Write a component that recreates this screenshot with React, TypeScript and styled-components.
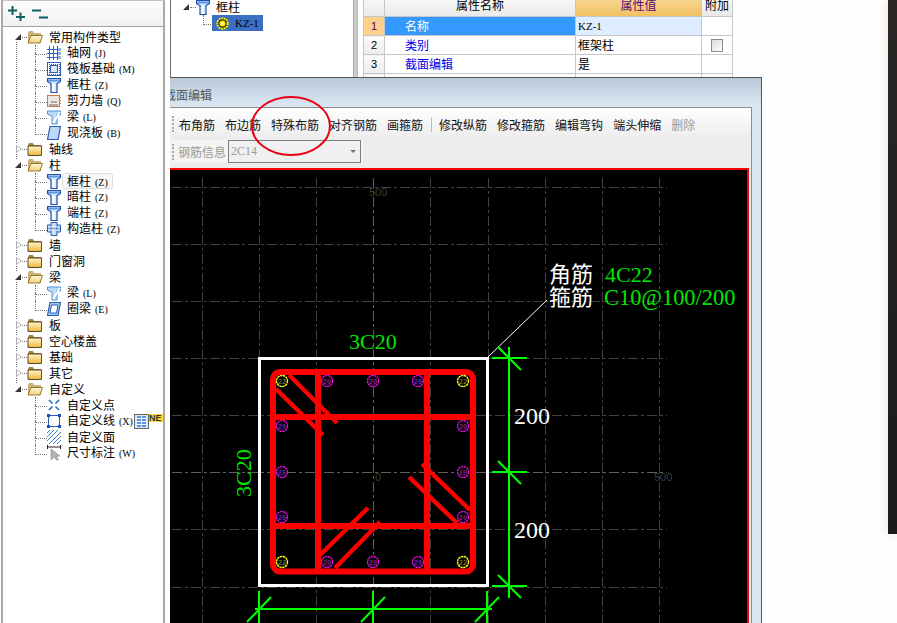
import React from 'react';
import styled, { createGlobalStyle } from 'styled-components';

const GlobalStyle = createGlobalStyle`
  html, body {
    margin: 0;
    padding: 0;
    background: #fff;
    font-family: "Noto Sans CJK SC", "Liberation Sans", sans-serif;
    font-size: 12px;
    color: #000;
  }
  * { box-sizing: border-box; }
`;

const Page = styled.div`
  position: relative;
  display: flex;
  width: 897px;
  height: 623px;
  overflow: hidden;
  background: #fefefe;
`;

/* left component type panel */
const LeftPanel = styled.div`
  flex: none;
  width: 164px;
  height: 100%;
  margin-left: 1px;
  display: flex;
  flex-direction: column;
  border-left: 2px solid #a9a9a9;
  border-right: 2px solid #a9a9a9;
  border-top: 1px solid #c4c4c4;
  background: #fff;
`;

const TreeToolbar = styled.div`
  flex: none;
  height: 26px;
  display: flex;
  align-items: center;
  gap: 7px;
  padding-left: 5px;
  border-bottom: 1px solid #a3a3a3;
  background: linear-gradient(#fcfcfc, #f1f1f1);
`;

const TreeBody = styled.div`
  flex: 1;
  padding-top: 2px;
`;

const RootNode = styled.div`
  position: relative;

  &:not(:last-child)::before {
    content: '';
    position: absolute;
    left: 13px;
    top: 8px;
    bottom: -8px;
    border-left: 1px dotted #777;
  }
`;

const RootRow = styled.div`
  position: relative;
  height: 16px;
  display: flex;
  align-items: center;
  padding-left: 11px;
`;

const Expander = styled.svg`
  position: relative;
  flex: none;
  width: 8px;
  height: 10px;
  background: #fff;
`;

const Stub = styled.span<{ $w?: number }>`
  flex: none;
  width: ${p => p.$w ?? 5}px;
  height: 0;
  border-top: 1px dotted #777;
`;

const Label = styled.span<{ $gap?: number }>`
  margin-left: ${p => p.$gap ?? 6}px;
  white-space: nowrap;
  line-height: 16px;
`;

const Key = styled.span`
  margin-left: 4px;
  font-family: "Liberation Serif", serif;
  font-size: 10px;
`;

const ChildRow = styled.div`
  position: relative;
  height: 16px;
  display: flex;
  align-items: center;
  padding-left: 44px;

  &::before {
    content: '';
    position: absolute;
    left: 32px;
    top: 0;
    width: 11px;
    height: 9px;
    border-left: 1px dotted #777;
    border-bottom: 1px dotted #777;
  }

  &:not(:last-child)::after {
    content: '';
    position: absolute;
    left: 32px;
    top: 8px;
    height: 8px;
    border-left: 1px dotted #777;
  }
`;

const ActiveLabel = styled(Label)`
  margin-left: 1px;
  padding: 0 4px;
  height: 16px;
  border: 1px solid #ddd;
  border-radius: 3px;
  line-height: 14px;
  background: #f8f8f8;
`;

const NewTool = styled.span`
  flex: none;
  margin-left: 1px;
  width: 15px;
  height: 15px;
  display: flex;
  align-items: center;
  justify-content: center;
  gap: 1px;
  border: 1px solid #666;
  background: #dfe8f3;
`;

const NewBar = styled.span`
  width: 4px;
  height: 11px;
  background: repeating-linear-gradient(#5b96dc 0 2px, #fff 2px 3px);
`;

const NewBadge = styled.span`
  flex: none;
  align-self: flex-start;
  height: 8px;
  width: 14px;
  margin-top: 1px;
  font-family: "Liberation Sans", sans-serif;
  font-size: 9px;
  font-weight: bold;
  line-height: 8px;
  overflow: hidden;
  background: #ffd92e;
  color: #333;
`;

/* top right: component list and property grid */
const Workspace = styled.div`
  flex: 1;
  min-width: 0;
  padding-left: 5px;
`;

const TopArea = styled.div`
  display: flex;
  height: 77px;
`;

const ComponentTree = styled.div`
  flex: none;
  width: 183px;
  border-left: 1px solid #6e6e6e;
  background: #fff;
`;

const CompRoot = styled.div`
  height: 16px;
  margin-top: -1px;
  display: flex;
  align-items: center;
  padding-left: 11px;
`;

const CompChild = styled.div`
  position: relative;
  height: 16px;
  margin-left: 41px;
  width: 51px;
  display: flex;
  align-items: center;
  gap: 6px;
  padding-left: 4px;
  background: #3a6fc2;

  &::before {
    content: '';
    position: absolute;
    left: -9px;
    top: 0;
    width: 9px;
    height: 9px;
    border-left: 1px dotted #777;
    border-bottom: 1px dotted #777;
  }
`;

const CompName = styled.span`
  font-family: "Liberation Serif", serif;
  font-size: 11px;
  line-height: 16px;
  color: #000;
`;

const Splitter = styled.div`
  flex: none;
  width: 10px;
  border-left: 1px solid #a8a8a8;
  border-right: 5px solid #fff;
  background: linear-gradient(90deg, #d5d5d5, #bbb);
`;

const TableClip = styled.div`
  flex: none;
  width: 370px;
  height: 77px;
  overflow: hidden;
`;

const PropTable = styled.table`
  width: 370px;
  margin-top: -6px;
  border-collapse: collapse;
  table-layout: fixed;
`;

const HeadCell = styled.th<{ $active?: boolean; $w: number }>`
  width: ${p => p.$w}px;
  height: 22px;
  padding: 0 0 2px;
  font-weight: normal;
  font-size: 12px;
  text-align: center;
  border: 1px solid #c6c6c6;
  color: ${p => (p.$active ? '#5a0a70' : '#000')};
  background: ${p =>
    p.$active ? 'linear-gradient(#f8da9b, #f2c061)' : 'linear-gradient(#fafafa, #e9e9e9)'};
`;

const RowHead = styled.td<{ $active?: boolean }>`
  height: 19px;
  padding: 0 0 1px;
  font-family: "Liberation Sans", sans-serif;
  font-size: 11px;
  text-align: center;
  border: 1px solid #c6c6c6;
  color: ${p => (p.$active ? '#5a0a50' : '#000')};
  background: ${p => (p.$active ? '#fdd08c' : 'linear-gradient(#fbfbfb, #ececec)')};
`;

const NameCell = styled.td<{ $active?: boolean }>`
  padding: 0 0 1px 20px;
  font-size: 12px;
  line-height: 16px;
  border: 1px solid #c6c6c6;
  color: ${p => (p.$active ? '#fff' : '#0000e6')};
  background: ${p => (p.$active ? '#3399ff' : '#fff')};
`;

const ValueCell = styled.td<{ $active?: boolean; $latin?: boolean }>`
  padding: 0 0 1px 2px;
  font-size: ${p => (p.$latin ? '11px' : '12px')};
  line-height: 16px;
  font-family: ${p => (p.$latin ? '"Liberation Serif", serif' : 'inherit')};
  border: 1px solid #c6c6c6;
  background: ${p => (p.$active ? '#deedff' : '#fff')};
`;

const ExtraCell = styled.td`
  padding: 0;
  border: 1px solid #c6c6c6;
  background: #fff;
`;

const CheckBox = styled.span`
  display: block;
  width: 12px;
  height: 13px;
  margin: 0 auto;
  border: 1px solid #8c8c8c;
  background: linear-gradient(135deg, #dcdcdc, #fff);
`;

/* section editor window */
const EditorWindow = styled.div`
  position: absolute;
  left: 170px;
  top: 77px;
  bottom: 0;
  width: 592px;
  display: flex;
  flex-direction: column;
  border-top: 1px solid #555;
  border-right: 1px solid #555;
  background: #dbe6f3;
`;

const TitleBar = styled.div`
  flex: none;
  height: 29px;
  overflow: hidden;
  display: flex;
  align-items: center;
  padding-top: 3px;
  background: linear-gradient(#b9c9d9, #dce7f3);
`;

const Title = styled.span`
  margin-left: -6px;
  color: #555;
  font-size: 12px;
  white-space: nowrap;
`;

const EditorBody = styled.div`
  flex: 1;
  min-height: 0;
  margin-right: 9px;
  display: flex;
  flex-direction: column;
  border-top: 1px solid #8d8d8d;
  border-right: 1px solid #8d8d8d;
  background: #f3f3f3;
`;

const ToolRow = styled.div`
  flex: none;
  height: 32px;
  display: flex;
  align-items: center;
  padding-left: 2px;
  background: linear-gradient(#fefefe, #ececec);
`;

const Grip = styled.span`
  flex: none;
  width: 2px;
  height: 16px;
  margin-right: 5px;
  border-left: 2px dotted #aaa;
`;

const ToolButton = styled.span<{ $disabled?: boolean }>`
  margin-right: 10px;
  font-size: 12px;
  white-space: nowrap;
  color: ${p => (p.$disabled ? '#999' : '#111')};
`;

const ToolSep = styled.span`
  flex: none;
  width: 1px;
  height: 15px;
  margin: 0 7px 0 -2px;
  background: #bbb;
`;

const SecondRow = styled.div`
  flex: none;
  height: 28px;
  padding-bottom: 4px;
  display: flex;
  align-items: flex-start;
  background: #ececec;
`;

const SecondInner = styled.div`
  width: 193px;
  height: 23px;
  display: flex;
  align-items: center;
  padding-left: 2px;
  background: #f4f4f4;
  border-radius: 0 0 3px 0;
`;

const FieldLabel = styled.span`
  flex: none;
  width: 50px;
  margin-left: -1px;
  color: #999;
  font-size: 12px;
`;

const FakeSelect = styled.div`
  flex: none;
  width: 133px;
  height: 23px;
  display: flex;
  align-items: center;
  justify-content: space-between;
  padding: 0 4px 0 2px;
  border: 1px solid #7d7d7d;
  background: #f0f0f0;
  color: #999;
  font-family: "Liberation Serif", serif;
  font-size: 12px;
`;

const Caret = styled.span`
  width: 0;
  height: 0;
  border-left: 3px solid transparent;
  border-right: 3px solid transparent;
  border-top: 3px solid #777;
`;

const CanvasFrame = styled.div`
  flex: 1;
  min-height: 0;
  border-top: 2px solid #ff0000;
  border-right: 2px solid #ff0000;
  margin-right: 2px;
  background: #000;
`;

const Drawing = styled.svg`
  display: block;
  width: 577px;
  height: 453px;
`;

const GridText = styled.text`
  font-family: "Liberation Sans", sans-serif;
  font-size: 11px;
  fill: #3a3a3a;
`;

const DimText = styled.text<{ $size?: number }>`
  font-family: "Liberation Serif", serif;
  font-size: ${p => p.$size ?? 22}px;
  fill: #00e600;
`;

const WhiteText = styled.text<{ $size?: number }>`
  font-family: "Liberation Serif", serif;
  font-size: ${p => p.$size ?? 24}px;
  fill: #fff;
`;

const CjkText = styled.text`
  font-family: "Noto Sans CJK SC", sans-serif;
  font-size: 22px;
  fill: #fff;
`;

const BarText = styled.text<{ $corner: boolean }>`
  font-family: "Liberation Mono", monospace;
  font-size: 7px;
  text-anchor: middle;
  fill: ${p => (p.$corner ? '#99994a' : '#a030d0')};
`;

const CircleNote = styled.svg`
  position: absolute;
  left: 250px;
  top: 95px;
  width: 84px;
  height: 62px;
  pointer-events: none;
`;

const SideWindow = styled.div`
  position: absolute;
  right: 0;
  top: 0;
  width: 9px;
  height: 534px;
  background: linear-gradient(#2c2723, #1b1b1b);
  box-shadow: 0 0 12px rgba(0, 0, 0, 0.12);
`;

/* ---- icons ---- */
type IconKind = 'axis' | 'raft' | 'column' | 'wall' | 'beam' | 'slab' | 'ring' | 'hidden' | 'struct' | 'point' | 'line' | 'area' | 'dim';

const ExpandMark = ({ open }: { open: boolean }) => (
  <Expander viewBox="0 0 8 10">
    {open
      ? <path d="M1 8 L7 2 V8 Z" fill="#333" />
      : <path d="M2.5 1.5 L7 5 L2.5 8.5 Z" fill="#fff" stroke="#aaa" />}
  </Expander>
);

const Folder = ({ open }: { open: boolean }) => (
  <svg width="16" height="14" viewBox="0 0 16 14">
    <defs>
      <linearGradient id="folderShut" x1="0" y1="0" x2="0" y2="1">
        <stop offset="0" stopColor="#fff6cf" />
        <stop offset="1" stopColor="#eeb83a" />
      </linearGradient>
      <linearGradient id="folderOpen" x1="0" y1="0" x2="0" y2="1">
        <stop offset="0" stopColor="#fff8dc" />
        <stop offset="1" stopColor="#f2cf78" />
      </linearGradient>
    </defs>
    <path d="M1 3 L2 1 H6 L7 3 H14 V13 H1 Z" fill={open ? '#c9b27a' : '#a88a3a'} />
    {open
      ? <path d="M1 13 L4 5.5 H15.5 L13 13 Z" fill="url(#folderOpen)" stroke="#7a5e20" strokeWidth="0.8" />
      : <path d="M1 4 H14.5 V13.5 H1 Z" fill="url(#folderShut)" stroke="#2e2408" strokeWidth="0.8" />}
  </svg>
);

const ColumnShape = () => (
  <svg width="14" height="15" viewBox="0 0 14 15">
    <path d="M0.5 0.5H13.5V3.5L10 5.5V14.5H4V5.5L0.5 3.5Z" fill="#d9e8fb" stroke="#1c4fa8" strokeWidth="1.2" />
    <path d="M1 2.5H13" stroke="#5d94e4" strokeWidth="2" />
    <path d="M6.5 6V14" stroke="#fff" strokeWidth="2.4" />
  </svg>
);

const Icon = ({ kind }: { kind: IconKind }) => {
  const blue = '#2a5cb4';
  switch (kind) {
    case 'axis':
      return (
        <svg width="14" height="14" viewBox="0 0 14 14" fill="none" stroke="#2f62c8" shapeRendering="crispEdges">
          <path d="M0 3.5H10M0 7.5H10M0 11.5H10M2.5 0V14M6.5 0V14M10.5 0V14" />
          <path d="M11 2h3v3h-3zM11 6h3v3h-3zM11 10h3v3h-3z" fill="#8fb4ea" stroke="none" />
        </svg>
      );
    case 'raft':
      return (
        <svg width="14" height="14" viewBox="0 0 14 14" fill="none" stroke={blue} shapeRendering="crispEdges">
          <rect x="0.5" y="0.5" width="13" height="13" strokeWidth="1.4" />
          <rect x="3.5" y="3.5" width="7" height="7" fill="#dbe8fb" />
          <path d="M0 2H14M0 12H14M2 0V14M12 0V14" strokeDasharray="1 1" />
        </svg>
      );
    case 'wall':
      return (
        <svg width="14" height="14" viewBox="0 0 14 14">
          <rect x="0.5" y="1.5" width="12" height="11" fill="#eee8e0" stroke="#c47a4a" />
          <path d="M2 10h9v2H2zM4 7h6v2H4z" fill="#aaa" />
          <path d="M13 3v1M13 6v1M13 9v1" stroke="#d08030" strokeWidth="2" />
        </svg>
      );
    case 'beam':
      return (
        <svg width="14" height="15" viewBox="0 0 14 15">
          <path d="M0.5 1H13.5V5L10 4V14H5V6L0.5 4Z" fill="#bfdcf6" stroke="#4a90d8" />
          <path d="M6 13L13 2" stroke="#fff" strokeWidth="2" />
        </svg>
      );
    case 'slab':
      return (
        <svg width="14" height="14" viewBox="0 0 14 14">
          <path d="M3 0.5H13.5L11 13.5H0.5Z" fill="#bcd8f6" stroke={blue} strokeWidth="1.2" />
        </svg>
      );
    case 'ring':
      return (
        <svg width="14" height="14" viewBox="0 0 14 14" fill="none">
          <path d="M3 0.5H13.5L11 13.5H0.5Z" fill="#a9c9ee" stroke={blue} strokeWidth="1.2" />
          <path d="M4.5 3H11L9.5 11H3Z" fill="#fff" stroke={blue} />
        </svg>
      );
    case 'struct':
      return (
        <svg width="14" height="14" viewBox="0 0 14 14">
          <path d="M4 0.5H10V3H13.5V10H10V13.5H4V10H0.5V3H4Z" fill="#cfe0f6" stroke={blue} />
          <path d="M4 3V10M10 3V10M0.5 6.5H13.5" stroke={blue} strokeDasharray="1 1" />
        </svg>
      );
    case 'point':
      return (
        <svg width="14" height="14" viewBox="0 0 14 14" stroke="#2a6cc8" strokeWidth="1.6">
          <path d="M2 2L5.5 5.5M12 2L8.5 5.5M2 12L5.5 8.5M12 12L8.5 8.5" />
        </svg>
      );
    case 'line':
      return (
        <svg width="14" height="14" viewBox="0 0 14 14">
          <rect x="1.5" y="1.5" width="11" height="11" fill="none" stroke={blue} />
          <path d="M0 0h3v3H0zM11 0h3v3h-3zM0 11h3v3H0zM11 11h3v3h-3z" fill="#1650c0" />
        </svg>
      );
    case 'area':
      return (
        <svg width="14" height="14" viewBox="0 0 14 14" stroke="#3d80d8">
          <path d="M0 3L3 0M0 7L7 0M0 11L11 0M2 14L14 2M6 14L14 6M10 14L14 10" />
        </svg>
      );
    case 'dim':
      return (
        <svg width="14" height="16" viewBox="0 0 14 16">
          <path d="M0.5 0V4M13.5 0V4M0.5 2H13.5" stroke="#222" />
          <path d="M4 4L4 15L7 12L10 15.5L11.5 14.5L9 11.5L13 11Z" fill="#b5b5b5" stroke="#888" strokeWidth="0.6" />
        </svg>
      );
    default:
      return <ColumnShape />;
  }
};

const TreeActions = () => (
  <>
    <svg width="17" height="15" viewBox="0 0 17 15" stroke="#0f5f60" strokeWidth="2">
      <path d="M0 4.5H9M4.5 0V9M8 11H17M12.5 6.5V15" />
    </svg>
    <svg width="16" height="10" viewBox="0 0 16 10" stroke="#0f5f60" strokeWidth="2">
      <path d="M0 1.5H9M7 8.5H16" />
    </svg>
  </>
);

const SunIcon = () => (
  <svg width="13" height="13" viewBox="0 0 13 13">
    <circle cx="6.5" cy="6.5" r="5.2" fill="#222" stroke="#ffee00" strokeWidth="2" strokeDasharray="1.8 0.7" />
    <circle cx="6.5" cy="6.5" r="3" fill="#ffee00" />
    <circle cx="6.5" cy="6.5" r="1.2" fill="#fffbc0" />
  </svg>
);

/* ---- data ---- */
interface TreeChild {
  name: string;
  key?: string;
  icon: IconKind;
  active?: boolean;
  isNew?: boolean;
}

interface TreeGroup {
  name: string;
  items?: TreeChild[];
}

const TREE: TreeGroup[] = [
  {
    name: '常用构件类型',
    items: [
      { name: '轴网', key: '(J)', icon: 'axis' },
      { name: '筏板基础', key: '(M)', icon: 'raft' },
      { name: '框柱', key: '(Z)', icon: 'column' },
      { name: '剪力墙', key: '(Q)', icon: 'wall' },
      { name: '梁', key: '(L)', icon: 'beam' },
      { name: '现浇板', key: '(B)', icon: 'slab' },
    ],
  },
  { name: '轴线' },
  {
    name: '柱',
    items: [
      { name: '框柱', key: '(Z)', icon: 'column', active: true },
      { name: '暗柱', key: '(Z)', icon: 'hidden' },
      { name: '端柱', key: '(Z)', icon: 'hidden' },
      { name: '构造柱', key: '(Z)', icon: 'struct' },
    ],
  },
  { name: '墙' },
  { name: '门窗洞' },
  {
    name: '梁',
    items: [
      { name: '梁', key: '(L)', icon: 'beam' },
      { name: '圈梁', key: '(E)', icon: 'ring' },
    ],
  },
  { name: '板' },
  { name: '空心楼盖' },
  { name: '基础' },
  { name: '其它' },
  {
    name: '自定义',
    items: [
      { name: '自定义点', icon: 'point' },
      { name: '自定义线', key: '(X)', icon: 'line', isNew: true },
      { name: '自定义面', icon: 'area' },
      { name: '尺寸标注', key: '(W)', icon: 'dim' },
    ],
  },
];

const TOOLS_A = ['布角筋', '布边筋', '特殊布筋', '对齐钢筋', '画箍筋'];
const TOOLS_B = ['修改纵筋', '修改箍筋', '编辑弯钩', '端头伸缩'];

const PROPS = [
  { name: '名称', value: 'KZ-1', latin: true, active: true },
  { name: '类别', value: '框架柱', check: true },
  { name: '截面编辑', value: '是' },
  { name: '截面宽度', value: '', check: true },
];

/* ---- drawing ---- */
const GRID_X = [202, 259, 316, 373, 430, 488, 545, 602, 659];
const GRID_Y = [187, 244, 301, 358, 415, 472, 529, 587];
const BAR_X = [282, 327, 373, 418, 463];
const BAR_Y = [381, 426, 472, 517, 562];
const RED = '#ff0000';
const GREEN = '#00ff00';

const BARS = BAR_Y.flatMap((y, r) =>
  BAR_X.map((x, c) => ({ x, y, r, c })).filter(b => r === 0 || r === 4 || b.c === 0 || b.c === 4),
);

const HOOKS = [
  'M289 375L337 423',
  'M276 389L323 435',
  'M422 464L470 510',
  'M409 477L457 523',
  'M368 508L320 555',
  'M380 522L335 568',
];

const SectionDrawing = () => (
  <Drawing viewBox="170 170 577 453">
    <g strokeDasharray="10 3 3 3" strokeWidth="1" shapeRendering="crispEdges">
      {GRID_X.map(x => (
        <line key={x} x1={x} x2={x} y1={178} y2={623} stroke={x === 373 ? '#5e5e5e' : '#414141'} />
      ))}
      {GRID_Y.map(y => (
        <line key={y} x1={172} x2={667} y1={y} y2={y} stroke={y === 472 ? '#5e5e5e' : '#414141'} />
      ))}
    </g>
    <GridText x={369} y={196}>500</GridText>
    <GridText x={654} y={481}>500</GridText>
    <GridText x={375} y={481}>0</GridText>

    <rect x={259.5} y={358.5} width={228} height={227} fill="none" stroke="#fff" strokeWidth="3" />

    <g fill="none" stroke={RED} strokeWidth="6">
      <rect x={273} y={372} width={200} height={199.5} rx={7} />
      <path d="M276 417H472M276 526H472M318 372V571M427 372V571" shapeRendering="crispEdges" />
      {HOOKS.map(d => <path key={d} d={d} strokeWidth="4.5" />)}
    </g>

    {BARS.map(({ x, y, r, c }) => {
      const corner = (r === 0 || r === 4) && (c === 0 || c === 4);
      return (
        <g key={`${x}-${y}`}>
          <circle
            cx={x}
            cy={y}
            r={5.5}
            fill="#000"
            stroke={corner ? '#ffff00' : '#ff00ff'}
            strokeWidth={corner ? 1.4 : 1.2}
            strokeDasharray="2.4 0.5"
          />
          <BarText $corner={corner} x={x} y={y + 2.5}>{corner ? '22' : '20'}</BarText>
        </g>
      );
    })}

    <line x1={488} y1={357} x2={547} y2={300} stroke="#fff" />
    <g stroke={GREEN} strokeWidth="2" fill="none">
      <path d="M509 347V598M492 358H527M492 472H527M492 586H527M498 347L521 370M498 461L521 484M498 575L521 598" />
      <path d="M255 609H492M259 591V623M373 591V623M487 591V623M247 622L271 597M361 622L385 597M475 622L499 597" />
    </g>

    <DimText x={349} y={349}>3C20</DimText>
    <DimText x={0} y={0} transform="translate(251 497) rotate(-90)">3C20</DimText>
    <WhiteText x={514} y={424}>200</WhiteText>
    <WhiteText x={514} y={538}>200</WhiteText>
    <CjkText x={549} y={282}>角筋</CjkText>
    <CjkText x={549} y={305}>箍筋</CjkText>
    <DimText x={605} y={282}>4C22</DimText>
    <DimText $size={22.4} x={604} y={305}>C10@100/200</DimText>
  </Drawing>
);

const App = () => (
  <Page>
    <GlobalStyle />
    <LeftPanel>
      <TreeToolbar><TreeActions /></TreeToolbar>
      <TreeBody>
        {TREE.map(group => (
          <RootNode key={group.name + (group.items?.length ?? 0)}>
            <RootRow>
              <ExpandMark open={!!group.items} />
              <Stub />
              <Folder open={!!group.items} />
              <Label>{group.name}</Label>
            </RootRow>
            {group.items?.map(item => {
              const Text = item.active ? ActiveLabel : Label;
              return (
                <ChildRow key={item.name}>
                  <Icon kind={item.icon} />
                  <Text>
                    {item.name}
                    {item.key && <Key>{item.key}</Key>}
                  </Text>
                  {item.isNew && (
                    <>
                      <NewTool><NewBar /><NewBar /></NewTool>
                      <NewBadge>NE</NewBadge>
                    </>
                  )}
                </ChildRow>
              );
            })}
          </RootNode>
        ))}
      </TreeBody>
    </LeftPanel>

    <Workspace>
      <TopArea>
        <ComponentTree>
          <CompRoot>
            <ExpandMark open />
            <Stub $w={6} />
            <Icon kind="column" />
            <Label>框柱</Label>
          </CompRoot>
          <CompChild>
            <SunIcon />
            <CompName>KZ-1</CompName>
          </CompChild>
        </ComponentTree>
        <Splitter />
        <TableClip>
          <PropTable>
            <thead>
              <tr>
                <HeadCell $w={21} />
                <HeadCell $w={191}>属性名称</HeadCell>
                <HeadCell $w={126} $active>属性值</HeadCell>
                <HeadCell $w={31}>附加</HeadCell>
              </tr>
            </thead>
            <tbody>
              {PROPS.map((row, i) => (
                <tr key={row.name}>
                  <RowHead $active={row.active}>{i + 1}</RowHead>
                  <NameCell $active={row.active}>{row.name}</NameCell>
                  <ValueCell $active={row.active} $latin={row.latin}>{row.value}</ValueCell>
                  <ExtraCell>{row.check && <CheckBox />}</ExtraCell>
                </tr>
              ))}
            </tbody>
          </PropTable>
        </TableClip>
      </TopArea>
    </Workspace>

    <EditorWindow>
      <TitleBar><Title>截面编辑</Title></TitleBar>
      <EditorBody>
        <ToolRow>
          <Grip />
          {TOOLS_A.map(t => <ToolButton key={t}>{t}</ToolButton>)}
          <ToolSep />
          {TOOLS_B.map(t => <ToolButton key={t}>{t}</ToolButton>)}
          <ToolButton $disabled>删除</ToolButton>
        </ToolRow>
        <SecondRow>
          <SecondInner>
            <Grip />
            <FieldLabel>钢筋信息</FieldLabel>
            <FakeSelect>2C14<Caret /></FakeSelect>
          </SecondInner>
        </SecondRow>
        <CanvasFrame>
          <SectionDrawing />
        </CanvasFrame>
      </EditorBody>
    </EditorWindow>

    <CircleNote viewBox="0 0 84 62">
      <ellipse cx={41} cy={31} rx={39} ry={29} fill="none" stroke="#e60012" strokeWidth="2" />
    </CircleNote>
    <SideWindow />
  </Page>
);

export default App;
